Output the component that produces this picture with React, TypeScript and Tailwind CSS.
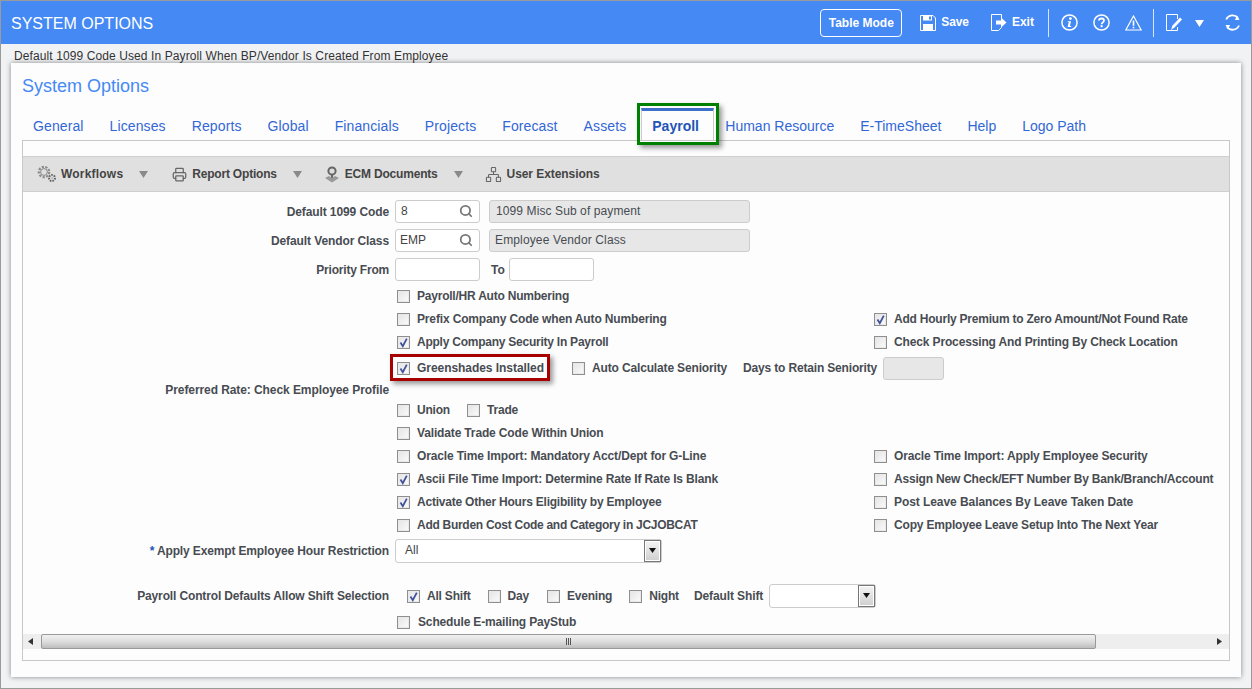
import React from "react";
import { Printer, Network, Search } from "lucide-react";

const Check = ({ on = false }: { on?: boolean }) => (
  <span className="relative inline-block w-[13px] h-[13px] shrink-0 border border-[#8f8f8f] bg-gradient-to-br from-[#e4e4e4] to-[#fbfbfb] shadow-[inset_0_0_0_1px_#e9e9e9]">
    {on && (
      <svg viewBox="0 0 13 13" className="absolute left-[-1px] top-[-1px] w-[13px] h-[13px]">
        <path d="M3.5 6.5 L5.8 10.2 L9.8 2.6" fill="none" stroke="#42529a" strokeWidth="1.8" />
      </svg>
    )}
  </span>
);

const Item = ({ text, on = false, gap = "gap-[7px]", track = "tracking-[-0.15px]" }: { text: string; on?: boolean; gap?: string; track?: string }) => (
  <span className={`flex items-center h-4 ${gap} ${track} whitespace-nowrap text-xs font-bold text-[#484c52]`}>
    <Check on={on} />
    {text}
  </span>
);

const Row = ({ h, label, children, right, track = "tracking-[-0.14px]" }: { h: string; label?: React.ReactNode; children?: React.ReactNode; right?: React.ReactNode; track?: string }) => (
  <div className={`flex items-center ${h}`}>
    <div className={`w-[366px] shrink-0 text-right text-xs font-bold ${track} text-[#484c52] whitespace-nowrap`}>{label}</div>
    <div className="ml-[6px] w-[479px] shrink-0 flex items-center">{children}</div>
    {right && <div className="flex items-center">{right}</div>}
  </div>
);

const Caret = () => (
  <svg width="9" height="7" viewBox="0 0 9 7"><path d="M0 0h9L4.5 7z" fill="#8a8a8a" /></svg>
);

const SelectBtn = () => (
  <span className="flex items-center justify-center w-[17px] h-[22px] bg-gradient-to-b from-[#f4f4f4] to-[#cfcfcf] border border-[#777] shadow-[inset_0_0_0_1px_#fff]">
    <svg width="7" height="5" viewBox="0 0 7 5"><path d="M0 0h7L3.5 5z" fill="#111" /></svg>
  </span>
);

const tabs = ["General", "Licenses", "Reports", "Global", "Financials", "Projects", "Forecast", "Assets"];
const tabsAfter = ["Human Resource", "E-TimeSheet", "Help", "Logo Path"];

export default function App() {
  return (
    <div className="w-[1252px] h-[689px] overflow-hidden border border-[#9a9a9a] bg-[#f1f2f4] font-['Liberation_Sans',Arial,sans-serif] flex flex-col">
      <header className="h-[43px] shrink-0 bg-[#4589f4] flex items-center text-white">
        <h1 className="ml-[10px] mt-[3px] text-base leading-none">SYSTEM OPTIONS</h1>
        <button className="ml-[667px] w-[82px] h-[28px] border border-white rounded-[4px] text-xs font-bold text-white">Table Mode</button>
        <span className="ml-[18px] flex items-center gap-[5px] text-xs font-bold">
          <svg width="16" height="16" viewBox="0 0 16 16"><path d="M0.5 0.5H13L15.5 3V15.5H0.5Z" fill="none" stroke="#fff" /><path d="M3 0.5H12V5.5H3Z" fill="#fff" /><path d="M3 9H13V15H3Z" fill="#fff" /><rect x="9" y="1.5" width="2" height="3" fill="#4589f4" /></svg>
          <span className="tracking-[-0.1px] -mt-px">Save</span>
        </span>
        <span className="ml-[22px] flex items-center gap-[5px] text-xs font-bold">
          <svg width="16" height="17" viewBox="0 0 16 17"><path d="M10.5 5V.5H.5V16.5H7.5L10.5 13.5V12" fill="none" stroke="#fff" /><path d="M5 6.5H10V3.5L15.5 8.5L10 13.5V10.5H5Z" fill="#fff" /></svg>
          <span className="-mt-px">Exit</span>
        </span>
        <span className="ml-[14px] w-px h-[28px] bg-[#d8e6fc]" />
        <svg className="ml-[12px]" width="17" height="17" viewBox="0 0 17 17"><circle cx="8.5" cy="8.5" r="7.6" fill="none" stroke="#fff" strokeWidth="1.5" /><circle cx="9.4" cy="4.6" r="1.4" fill="#fff" /><path d="M6.8 7.2H10L8.9 12.1H10.2V13H6.6L7.8 8.1H6.8Z" fill="#fff" /></svg>
        <svg className="ml-[15px]" width="17" height="17" viewBox="0 0 17 17"><circle cx="8.5" cy="8.5" r="7.6" fill="none" stroke="#fff" strokeWidth="1.5" /><path d="M6 6.6C6 3.8 11 3.8 11 6.6C11 8.3 8.6 8.4 8.6 10.3" fill="none" stroke="#fff" strokeWidth="1.8" /><rect x="7.6" y="11.2" width="2" height="2" fill="#fff" /></svg>
        <svg className="ml-[15px]" width="17" height="16" viewBox="0 0 17 16"><path d="M8.5 1L16.2 15H.8Z" fill="none" stroke="#fff" strokeWidth="1.2" /><rect x="7.7" y="5.5" width="1.6" height="5.3" fill="#fff" /><rect x="7.7" y="11.8" width="1.6" height="1.5" fill="#fff" /></svg>
        <span className="ml-[11px] w-px h-[28px] bg-[#d8e6fc]" />
        <svg className="ml-[12px]" width="17" height="17" viewBox="0 0 17 17"><path d="M11.5 5V.5H.5V16.5H11.5V13" fill="none" stroke="#fff" /><path d="M5 16L6.5 11.5L14 3.5L16 5.5L8.5 13.5Z" fill="#fff" /></svg>
        <svg className="ml-[12px] mt-[2px]" width="9" height="7" viewBox="0 0 9 7"><path d="M0 0h9L4.5 7z" fill="#fff" /></svg>
        <svg className="ml-[20px]" width="17" height="17" viewBox="0 0 17 17"><path d="M2.2 5.5A7 7 0 0 1 14 4" fill="none" stroke="#fff" strokeWidth="1.8" /><path d="M15 11.5A7 7 0 0 1 3 13" fill="none" stroke="#fff" strokeWidth="1.8" /><path d="M13 1.5L15.5 6H11Z" fill="#fff" /><path d="M4 15.5L1.5 11H6Z" fill="#fff" /></svg>
      </header>

      <div className="h-[19px] shrink-0 pl-[13px] text-xs leading-[24px] tracking-[0.1px] text-[#333]">Default 1099 Code Used In Payroll When BP/Vendor Is Created From Employee</div>

      <main className="ml-[10px] w-[1230px] h-[614px] bg-[#fdfdfd] shadow-[0_0_5px_rgba(0,0,0,0.45)] flex flex-col">
        <h2 className="ml-[11px] mt-[12px] h-[22px] text-lg leading-[22px] text-[#4589f4]">System Options</h2>

        <nav className="ml-[22px] mt-[11px] h-[32px] flex items-start text-sm text-[#3367d6]">
          {tabs.map((t) => (
            <span key={t} className="mr-[26px] mt-[10px] leading-[16px] tracking-[0.11px]">{t}</span>
          ))}
          <span className="relative -ml-[11px] mr-[11px] w-[73px] h-[32px] border-t-[3px] border-x border-t-[#3d6fc9] border-x-[#ccc] bg-[#fdfdfd] pl-[10px] font-bold text-[#1f55b8] leading-[30px] z-10">
            Payroll
            <span className="absolute -left-[5px] -top-[8px] -right-[6px] -bottom-[5px] border-[3px] border-[#008000] shadow-[3px_3px_5px_rgba(0,0,0,0.4)]" />
          </span>
          {tabsAfter.map((t) => (
            <span key={t} className="mr-[26px] mt-[10px] leading-[16px]">{t}</span>
          ))}
        </nav>

        <section className="ml-[11px] w-[1208px] h-[521px] border border-[#c8c8c8] flex flex-col">
          <div className="mt-[15px] h-[36px] shrink-0 bg-[#e0e0e0] border-y border-[#cfcfcf] flex items-center text-xs font-bold text-[#444]">
            <svg className="ml-[14px]" width="19" height="18" viewBox="0 0 19 18" fill="none">
              <circle cx="7" cy="7" r="5.2" stroke="#8a8a8a" strokeWidth="2.2" strokeDasharray="2.2 1.4" />
              <circle cx="7" cy="7" r="3.4" stroke="#888" strokeWidth="1" />
              <circle cx="15" cy="13" r="3" stroke="#666" strokeWidth="2" strokeDasharray="1.6 1" />
              <circle cx="15" cy="13" r="1" fill="#bbb" />
            </svg>
            <span className="ml-[5px] tracking-[0.2px]">Workflows</span>
            <span className="ml-[16px] flex"><Caret /></span>
            <Printer className="ml-[24px]" size={15} color="#666" strokeWidth={2} />
            <span className="ml-[5px] tracking-[-0.2px]">Report Options</span>
            <span className="ml-[16px] flex"><Caret /></span>
            <svg className="ml-[22px]" width="16" height="17" viewBox="0 0 16 17"><circle cx="8" cy="5" r="3.6" fill="#ddd" stroke="#666" strokeWidth="2" /><rect x="7" y="8" width="2" height="4" fill="#666" /><path d="M1 12L5 10L8 12L11 10L15 12L8 16.5Z" fill="#999" /></svg>
            <span className="ml-[5px] tracking-[-0.2px]">ECM Documents</span>
            <span className="ml-[16px] flex"><Caret /></span>
            <Network className="ml-[22px]" size={17} color="#666" strokeWidth={1.5} />
            <span className="ml-[5px] tracking-[-0.07px]">User Extensions</span>
          </div>

          <div className="mt-[5px] flex-1 flex flex-col">
            <Row h="h-[29px]" label="Default 1099 Code" track="tracking-[-0.1px]">
              <span className="relative w-[85px] h-[23px] border border-[#ccc] rounded-[3px] bg-white text-xs text-[#444] leading-[21px] pl-[5px]">8<Search className="absolute right-[6px] top-[3px]" size={14} color="#777" strokeWidth={3} /></span>
              <span className="ml-[9px] w-[261px] h-[23px] border border-[#ccc] rounded-[3px] bg-[#e7e7e7] text-xs tracking-[0.1px] text-[#484c52] leading-[21px] pl-[6px]">1099 Misc Sub of payment</span>
            </Row>
            <Row h="h-[29px]" label="Default Vendor Class" track="tracking-[-0.1px]">
              <span className="relative w-[85px] h-[23px] border border-[#ccc] rounded-[3px] bg-white text-xs text-[#444] leading-[21px] pl-[4px]">EMP<Search className="absolute right-[6px] top-[3px]" size={14} color="#777" strokeWidth={3} /></span>
              <span className="ml-[9px] w-[261px] h-[23px] border border-[#ccc] rounded-[3px] bg-[#e7e7e7] text-xs tracking-[0.14px] text-[#484c52] leading-[21px] pl-[5px]">Employee Vendor Class</span>
            </Row>
            <Row h="h-[29px]" label="Priority From" track="tracking-[-0.2px]">
              <span className="w-[85px] h-[23px] border border-[#ccc] rounded-[3px] bg-white" />
              <span className="ml-[11px] text-xs font-bold text-[#484c52]">To</span>
              <span className="ml-[4px] w-[85px] h-[23px] border border-[#ccc] rounded-[3px] bg-white" />
            </Row>
            <Row h="h-[24px]"><span className="ml-[2px]"><Item text="Payroll/HR Auto Numbering" track="tracking-[-0.22px]" /></span></Row>
            <Row h="h-[23px] pb-px" right={<Item text="Add Hourly Premium to Zero Amount/Not Found Rate" on track="tracking-[-0.22px]" />}><span className="ml-[2px]"><Item text="Prefix Company Code when Auto Numbering" /></span></Row>
            <Row h="h-[23px] pb-px" right={<Item text="Check Processing And Printing By Check Location" track="tracking-[-0.14px]" />}><span className="ml-[2px]"><Item text="Apply Company Security In Payroll" on track="tracking-[-0.24px]" /></span></Row>
            <Row h="h-[28px]">
              <span className="relative ml-[2px]">
                <Item text="Greenshades Installed" on track="tracking-[-0.05px]" />
                <span className="absolute -left-[7px] -top-[6px] -right-[6px] -bottom-[5px] border-[3px] border-[#a80000] shadow-[3px_3px_5px_rgba(0,0,0,0.4)]" />
              </span>
              <span className="ml-[28px]"><Item text="Auto Calculate Seniority" /></span>
              <span className="ml-[16px] text-xs font-bold tracking-[-0.17px] text-[#484c52] whitespace-nowrap">Days to Retain Seniority</span>
              <span className="ml-[6px] w-[61px] h-[23px] shrink-0 border border-[#ccc] rounded-[3px] bg-[#e7e7e7]" />
            </Row>
            <Row h="h-[16px]" label="Preferred Rate: Check Employee Profile" track="tracking-[-0.08px]" />
            <Row h="h-[24px]">
              <span className="ml-[2px]"><Item text="Union" track="tracking-[-0.2px]" /></span>
              <span className="ml-[17px]"><Item text="Trade" track="tracking-[-0.2px]" /></span>
            </Row>
            <Row h="h-[23px] pb-px"><span className="ml-[2px]"><Item text="Validate Trade Code Within Union" /></span></Row>
            <Row h="h-[23px] pb-px" right={<Item text="Oracle Time Import: Apply Employee Security" track="tracking-[-0.15px]" />}><span className="ml-[2px]"><Item text="Oracle Time Import: Mandatory Acct/Dept for G-Line" /></span></Row>
            <Row h="h-[23px] pb-px" right={<Item text="Assign New Check/EFT Number By Bank/Branch/Account" track="tracking-[-0.2px]" />}><span className="ml-[2px]"><Item text="Ascii File Time Import: Determine Rate If Rate Is Blank" on /></span></Row>
            <Row h="h-[23px] pb-px" right={<Item text="Post Leave Balances By Leave Taken Date" track="tracking-[-0.07px]" />}><span className="ml-[2px]"><Item text="Activate Other Hours Eligibility by Employee" on track="tracking-[-0.22px]" /></span></Row>
            <Row h="h-[23px] pb-px" right={<Item text="Copy Employee Leave Setup Into The Next Year" track="tracking-[-0.18px]" />}><span className="ml-[2px]"><Item text="Add Burden Cost Code and Category in JCJOBCAT" track="tracking-[-0.28px]" /></span></Row>
            <Row h="h-[27px]" label={<><span className="text-[#1f55b8]">*</span> Apply Exempt Employee Hour Restriction</>}>
              <span className="w-[267px] h-[24px] border border-[#ccc] rounded-[3px] bg-white flex items-center justify-between text-xs text-[#444] pl-[9px]"><span className="-mt-[2px]">All</span><SelectBtn /></span>
            </Row>
            <div className="h-[18px]" />
            <Row h="h-[28px]" label="Payroll Control Defaults Allow Shift Selection">
              <span className="ml-[12px]"><Item text="All Shift" on track="tracking-[-0.2px]" /></span>
              <span className="ml-[17px]"><Item text="Day" track="tracking-[-0.2px]" /></span>
              <span className="ml-[18px]"><Item text="Evening" track="tracking-[-0.2px]" /></span>
              <span className="ml-[17px]"><Item text="Night" track="tracking-[-0.2px]" /></span>
              <span className="ml-[15px] text-xs font-bold tracking-[-0.1px] text-[#484c52] whitespace-nowrap">Default Shift</span>
              <span className="ml-[6px] -mt-px w-[107px] h-[24px] shrink-0 border border-[#ccc] rounded-[3px] bg-white flex items-center justify-end"><SelectBtn /></span>
            </Row>
            <Row h="h-[24px]"><span className="ml-[2px]"><Item text="Schedule E-mailing PayStub" gap="gap-[8px]" /></span></Row>

            <div className="h-[15px] bg-[#eeeeee] flex items-center">
              <svg className="ml-[5px]" width="5" height="7" viewBox="0 0 5 7"><path d="M5 0V7L0 3.5Z" fill="#333" /></svg>
              <div className="ml-[8px] w-[1055px] h-[15px] border border-[#999] rounded-[2px] bg-gradient-to-b from-[#f0f0f0] via-[#dedede] to-[#bdbdbd] flex items-center justify-center">
                <svg width="6" height="7" viewBox="0 0 6 7"><path d="M.5 0V7M2.5 0V7M4.5 0V7" stroke="#555" /></svg>
              </div>
              <svg className="ml-[121px]" width="5" height="7" viewBox="0 0 5 7"><path d="M0 0V7L5 3.5Z" fill="#333" /></svg>
            </div>
          </div>
        </section>
      </main>
    </div>
  );
}
